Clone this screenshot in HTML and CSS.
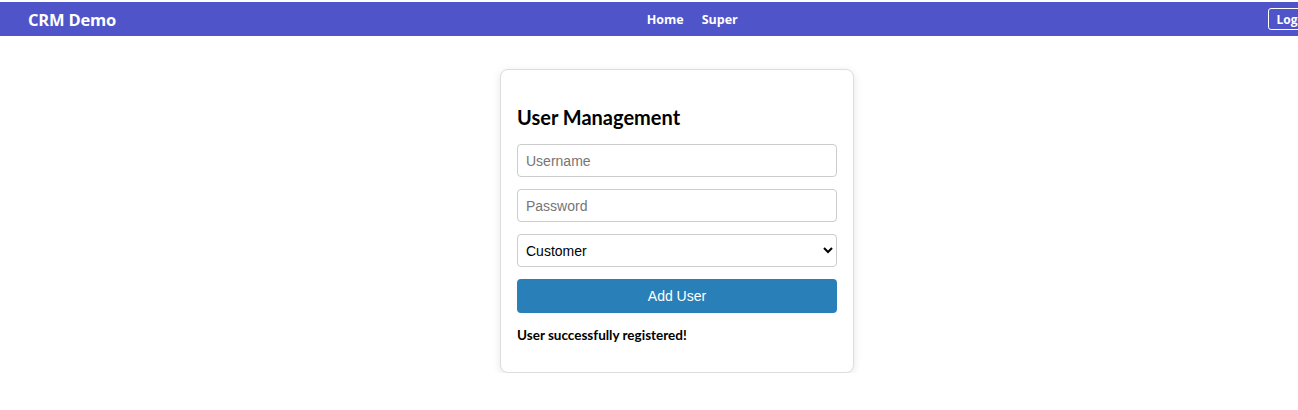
FILE: index.html
```html
<!DOCTYPE html>
<html lang="en">
<head>
<meta charset="utf-8">
<title>CRM Demo</title>
<link rel="stylesheet" href="styles.css">
</head>
<body>
<nav class="navbar">
  <div class="brand">CRM Demo</div>
  <div class="links">
    <a class="link" href="#">Home</a>
    <a class="link" href="#">Super</a>
  </div>
  <button class="logout" type="button">Logout</button>
</nav>
<main class="main">
  <section class="card">
    <h2 class="title">User Management</h2>
    <form class="form">
      <input class="field" type="text" placeholder="Username">
      <input class="field" type="password" placeholder="Password">
      <select class="field select">
        <option>Customer</option>
        <option>Admin</option>
      </select>
      <button class="submit" type="button">Add User</button>
    </form>
    <p class="message">User successfully registered!</p>
  </section>
</main>
</body>
</html>
```
FILE: styles.css
```css
html {
  overflow-x: hidden;
}
body {
  margin: 0;
  padding-top: 2px;
  background: #fff;
  font-family: "Open Sans", "Noto Sans", sans-serif;
  color: #000;
}
.navbar {
  width: 100%;
  height: 34px;
  padding: 0 28px;
  background: #4f54c8;
  display: flex;
  align-items: center;
  justify-content: space-between;
}
.brand {
  color: #fff;
  font-weight: 700;
  font-size: 16.5px;
  letter-spacing: -0.2px;
}
.links {
  display: flex;
  gap: 18px;
}
.link {
  color: #fff;
  text-decoration: none;
  font-weight: 700;
  font-size: 12.5px;
}
.logout {
  height: 22px;
  padding: 0 7px;
  background: transparent;
  border: 1px solid #fff;
  border-radius: 3px;
  color: #fff;
  font-family: "Open Sans", sans-serif;
  font-weight: 700;
  font-size: 12px;
}
.main {
  width: 100%;
  padding: 33px 28px 0;
  display: flex;
  justify-content: center;
}
.card {
  width: 320px;
  padding: 16px;
  border: 1px solid #ddd;
  border-radius: 8px;
  box-shadow: 0 2px 8px rgba(0, 0, 0, 0.1);
  background: #fff;
}
.title {
  margin: 17px 0 13px;
  font-family: "Lato", "Open Sans", sans-serif;
  font-size: 20px;
  font-weight: 700;
  line-height: 28px;
}
.form {
  display: flex;
  flex-direction: column;
  gap: 12px;
}
.field {
  box-sizing: border-box;
  width: 320px;
  height: 33px;
  padding: 0 8px;
  border: 1px solid #ccc;
  border-radius: 4px;
  font-family: "Liberation Sans", Arial, sans-serif;
  font-size: 14px;
  color: #000;
  background: #fff;
}
.field::placeholder {
  color: #757575;
}
.select {
  padding: 0 4px;
}
.submit {
  height: 34px;
  border: none;
  border-radius: 4px;
  background: #2980b9;
  color: #fff;
  font-family: "Liberation Sans", Arial, sans-serif;
  font-size: 14px;
}
.message {
  margin: 13px 0 12px;
  font-family: "Lato", "Open Sans", sans-serif;
  font-size: 13.5px;
  font-weight: 700;
  line-height: 18px;
}
```
